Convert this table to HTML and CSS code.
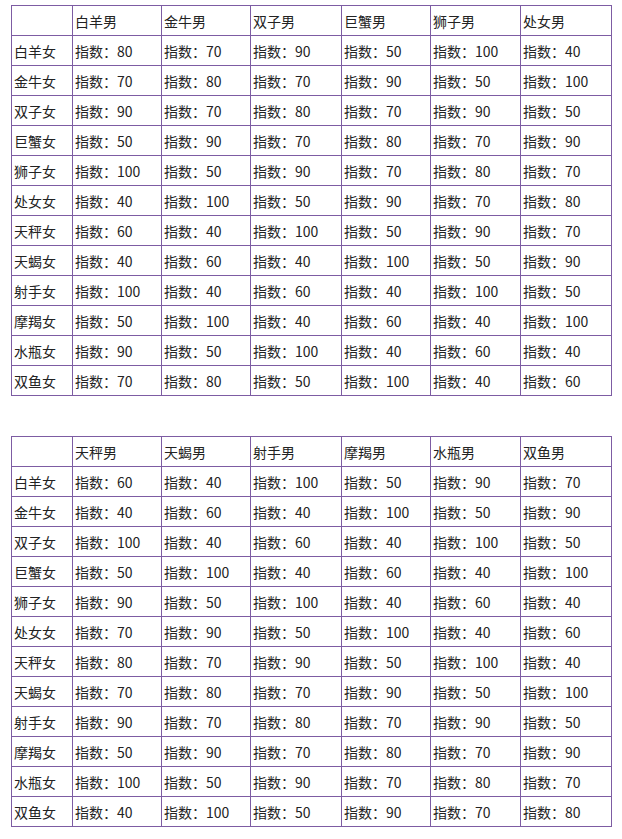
FILE: index.html
```html
<!DOCTYPE html>
<html lang="zh">
<head>
<meta charset="utf-8">
<link rel="stylesheet" href="styles.css">
</head>
<body>
<table class="grid">
<colgroup><col class="c0"><col class="c1"><col class="c2"><col class="c3"><col class="c4"><col class="c5"><col class="c6"></colgroup>
<tr><td></td><td>白羊男</td><td>金牛男</td><td>双子男</td><td>巨蟹男</td><td>狮子男</td><td>处女男</td></tr>
<tr><td>白羊女</td><td>指数：80</td><td>指数：70</td><td>指数：90</td><td>指数：50</td><td>指数：100</td><td>指数：40</td></tr>
<tr><td>金牛女</td><td>指数：70</td><td>指数：80</td><td>指数：70</td><td>指数：90</td><td>指数：50</td><td>指数：100</td></tr>
<tr><td>双子女</td><td>指数：90</td><td>指数：70</td><td>指数：80</td><td>指数：70</td><td>指数：90</td><td>指数：50</td></tr>
<tr><td>巨蟹女</td><td>指数：50</td><td>指数：90</td><td>指数：70</td><td>指数：80</td><td>指数：70</td><td>指数：90</td></tr>
<tr><td>狮子女</td><td>指数：100</td><td>指数：50</td><td>指数：90</td><td>指数：70</td><td>指数：80</td><td>指数：70</td></tr>
<tr><td>处女女</td><td>指数：40</td><td>指数：100</td><td>指数：50</td><td>指数：90</td><td>指数：70</td><td>指数：80</td></tr>
<tr><td>天秤女</td><td>指数：60</td><td>指数：40</td><td>指数：100</td><td>指数：50</td><td>指数：90</td><td>指数：70</td></tr>
<tr><td>天蝎女</td><td>指数：40</td><td>指数：60</td><td>指数：40</td><td>指数：100</td><td>指数：50</td><td>指数：90</td></tr>
<tr><td>射手女</td><td>指数：100</td><td>指数：40</td><td>指数：60</td><td>指数：40</td><td>指数：100</td><td>指数：50</td></tr>
<tr><td>摩羯女</td><td>指数：50</td><td>指数：100</td><td>指数：40</td><td>指数：60</td><td>指数：40</td><td>指数：100</td></tr>
<tr><td>水瓶女</td><td>指数：90</td><td>指数：50</td><td>指数：100</td><td>指数：40</td><td>指数：60</td><td>指数：40</td></tr>
<tr><td>双鱼女</td><td>指数：70</td><td>指数：80</td><td>指数：50</td><td>指数：100</td><td>指数：40</td><td>指数：60</td></tr>
</table>
<table class="grid second">
<colgroup><col class="c0"><col class="c1"><col class="c2"><col class="c3"><col class="c4"><col class="c5"><col class="c6"></colgroup>
<tr><td></td><td>天秤男</td><td>天蝎男</td><td>射手男</td><td>摩羯男</td><td>水瓶男</td><td>双鱼男</td></tr>
<tr><td>白羊女</td><td>指数：60</td><td>指数：40</td><td>指数：100</td><td>指数：50</td><td>指数：90</td><td>指数：70</td></tr>
<tr><td>金牛女</td><td>指数：40</td><td>指数：60</td><td>指数：40</td><td>指数：100</td><td>指数：50</td><td>指数：90</td></tr>
<tr><td>双子女</td><td>指数：100</td><td>指数：40</td><td>指数：60</td><td>指数：40</td><td>指数：100</td><td>指数：50</td></tr>
<tr><td>巨蟹女</td><td>指数：50</td><td>指数：100</td><td>指数：40</td><td>指数：60</td><td>指数：40</td><td>指数：100</td></tr>
<tr><td>狮子女</td><td>指数：90</td><td>指数：50</td><td>指数：100</td><td>指数：40</td><td>指数：60</td><td>指数：40</td></tr>
<tr><td>处女女</td><td>指数：70</td><td>指数：90</td><td>指数：50</td><td>指数：100</td><td>指数：40</td><td>指数：60</td></tr>
<tr><td>天秤女</td><td>指数：80</td><td>指数：70</td><td>指数：90</td><td>指数：50</td><td>指数：100</td><td>指数：40</td></tr>
<tr><td>天蝎女</td><td>指数：70</td><td>指数：80</td><td>指数：70</td><td>指数：90</td><td>指数：50</td><td>指数：100</td></tr>
<tr><td>射手女</td><td>指数：90</td><td>指数：70</td><td>指数：80</td><td>指数：70</td><td>指数：90</td><td>指数：50</td></tr>
<tr><td>摩羯女</td><td>指数：50</td><td>指数：90</td><td>指数：70</td><td>指数：80</td><td>指数：70</td><td>指数：90</td></tr>
<tr><td>水瓶女</td><td>指数：100</td><td>指数：50</td><td>指数：90</td><td>指数：70</td><td>指数：80</td><td>指数：70</td></tr>
<tr><td>双鱼女</td><td>指数：40</td><td>指数：100</td><td>指数：50</td><td>指数：90</td><td>指数：70</td><td>指数：80</td></tr>
</table>
</body>
</html>
```

FILE: styles.css
```css
html, body {
  margin: 0;
  padding: 0;
  background: #ffffff;
}
body {
  padding: 5px 0 0 11px;
  font-family: "Noto Sans CJK SC", "DejaVu Sans", sans-serif;
  font-size: 14px;
  color: #222222;
}
.grid {
  border-collapse: collapse;
  table-layout: fixed;
  width: 600px;
}
.grid.second {
  margin-top: 40px;
}
.c0 { width: 61px; }
.c1 { width: 89px; }
.c2 { width: 89px; }
.c3 { width: 91px; }
.c4 { width: 89px; }
.c5 { width: 90px; }
.c6 { width: 91px; }
.grid td {
  border: 1px solid #7d5ca3;
  height: 29px;
  padding: 0 0 0 2px;
  line-height: 18px;
  vertical-align: middle;
  white-space: nowrap;
  overflow: hidden;
}
```
